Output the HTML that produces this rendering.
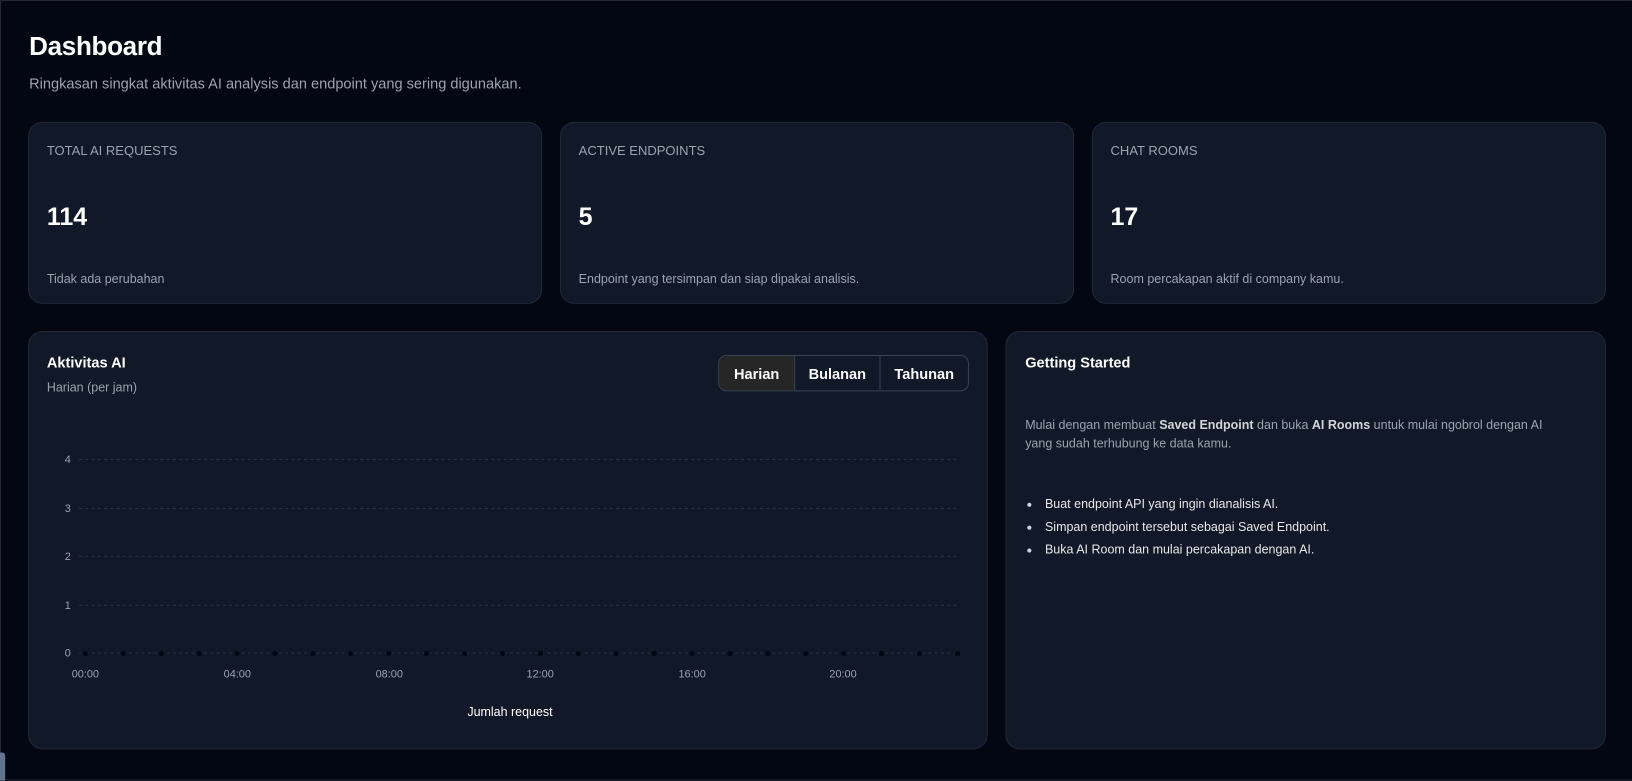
<!DOCTYPE html>
<html><head><meta charset="utf-8"><style>
*{box-sizing:border-box;margin:0;padding:0}
html,body{width:1632px;height:781px;overflow:hidden;background:#030712;font-family:"Liberation Sans",sans-serif;color:#f9fafb}
#w{position:absolute;left:0;top:0;width:1568px;height:750px;transform:scale(1.0408);transform-origin:0 0}
.frame{position:absolute;left:0;top:0;width:1568px;height:750px;border:1px solid #1f2937;border-right:none}
.card{position:absolute;background:#111827;border:1px solid #1f2937;border-radius:14px}
.lbl{position:absolute;left:17px;top:20px;font-size:12.5px;color:#9ca3af;font-weight:500}
.num{position:absolute;left:17px;top:77px;font-size:24px;font-weight:bold;color:#fff}
.sub{position:absolute;left:17px;top:143px;font-size:12px;color:#9ca3af}
h1{position:absolute;left:28px;top:31px;font-size:25px;font-weight:bold;color:#fff;letter-spacing:-0.3px}
.desc{position:absolute;left:28px;top:72px;font-size:14px;color:#9ca3af}
.tabs{position:absolute;left:690px;top:341px;width:241px;height:35px;border:1px solid #374151;border-radius:8px;overflow:hidden;display:flex;font-size:14px;font-weight:bold}
.tabs div{display:flex;align-items:center;justify-content:center;border-right:1px solid #374151}
.tabs div:last-child{border-right:none}
li{list-style:none;position:relative;padding-left:19px;margin-bottom:8px;font-size:12px;color:#e5e7eb}
li:before{content:"";position:absolute;left:2px;top:6px;width:4px;height:4px;border-radius:50%;background:#d1d5db}
</style></head><body>
<div id="w">
<div class="frame"></div>
<div style="position:absolute;left:0;top:723px;width:5px;height:27px;background:#64748b;border-radius:0 3px 0 0"></div>
<h1>Dashboard</h1>
<div class="desc">Ringkasan singkat aktivitas AI analysis dan endpoint yang sering digunakan.</div>

<div class="card" style="left:27px;top:117px;width:494px;height:175px"><div class="lbl">TOTAL AI REQUESTS</div><div class="num">114</div><div class="sub">Tidak ada perubahan</div></div>
<div class="card" style="left:538px;top:117px;width:494px;height:175px"><div class="lbl">ACTIVE ENDPOINTS</div><div class="num">5</div><div class="sub">Endpoint yang tersimpan dan siap dipakai analisis.</div></div>
<div class="card" style="left:1049px;top:117px;width:494px;height:175px"><div class="lbl">CHAT ROOMS</div><div class="num">17</div><div class="sub">Room percakapan aktif di company kamu.</div></div>

<div class="card" style="left:27px;top:318px;width:922px;height:402px">
<div style="position:absolute;left:17px;top:21px;font-size:14px;font-weight:bold;color:#fff">Aktivitas AI</div>
<div style="position:absolute;left:17px;top:46px;font-size:12px;color:#9ca3af">Harian (per jam)</div>
</div>
<div class="tabs"><div style="width:73px;background:#262626">Harian</div><div style="width:82px">Bulanan</div><div style="flex:1">Tahunan</div></div>
<svg style="position:absolute;left:0;top:0" width="1568" height="750" font-family="Liberation Sans, sans-serif">
<g stroke="#273244" stroke-dasharray="3 3" stroke-width="1">
<line x1="76" y1="441.5" x2="922" y2="441.5"/><line x1="76" y1="488.5" x2="922" y2="488.5"/><line x1="76" y1="534.5" x2="922" y2="534.5"/><line x1="76" y1="581.5" x2="922" y2="581.5"/><line x1="76" y1="627.5" x2="922" y2="627.5"/>
</g>
<g fill="#9ca3af" font-size="10.5" text-anchor="end"><text x="68" y="445">4</text><text x="68" y="492">3</text><text x="68" y="538">2</text><text x="68" y="585">1</text><text x="68" y="631">0</text></g>
<g fill="#9ca3af" font-size="10.5" text-anchor="middle"><text x="82" y="651">00:00</text><text x="228" y="651">04:00</text><text x="374" y="651">08:00</text><text x="519" y="651">12:00</text><text x="665" y="651">16:00</text><text x="810" y="651">20:00</text></g>
<g fill="#030712">
<circle cx="82" cy="628" r="2.5"/><circle cx="118.4" cy="628" r="2.5"/><circle cx="154.9" cy="628" r="2.5"/><circle cx="191.3" cy="628" r="2.5"/><circle cx="227.7" cy="628" r="2.5"/><circle cx="264.2" cy="628" r="2.5"/><circle cx="300.6" cy="628" r="2.5"/><circle cx="337" cy="628" r="2.5"/><circle cx="373.4" cy="628" r="2.5"/><circle cx="409.9" cy="628" r="2.5"/><circle cx="446.3" cy="628" r="2.5"/><circle cx="482.7" cy="628" r="2.5"/><circle cx="519.2" cy="628" r="2.5"/><circle cx="555.6" cy="628" r="2.5"/><circle cx="592" cy="628" r="2.5"/><circle cx="628.5" cy="628" r="2.5"/><circle cx="664.9" cy="628" r="2.5"/><circle cx="701.3" cy="628" r="2.5"/><circle cx="737.7" cy="628" r="2.5"/><circle cx="774.2" cy="628" r="2.5"/><circle cx="810.6" cy="628" r="2.5"/><circle cx="847" cy="628" r="2.5"/><circle cx="883.5" cy="628" r="2.5"/><circle cx="920" cy="628" r="2.5"/>
</g>
<text x="490" y="688" fill="#fff" font-size="12" text-anchor="middle">Jumlah request</text>
</svg>

<div class="card" style="left:966px;top:318px;width:577px;height:402px">
<div style="position:absolute;left:18px;top:21px;font-size:14px;font-weight:bold;color:#fff">Getting Started</div>
<div style="position:absolute;left:18px;top:80px;width:515px;font-size:12px;line-height:18px;color:#9ca3af">Mulai dengan membuat <b style="color:#d1d5db">Saved Endpoint</b> dan buka <b style="color:#d1d5db">AI Rooms</b> untuk mulai ngobrol dengan AI yang sudah terhubung ke data kamu.</div>
<ul style="position:absolute;left:18px;top:158px">
<li>Buat endpoint API yang ingin dianalisis AI.</li>
<li>Simpan endpoint tersebut sebagai Saved Endpoint.</li>
<li>Buka AI Room dan mulai percakapan dengan AI.</li>
</ul>
</div>
</div>
</body></html>
